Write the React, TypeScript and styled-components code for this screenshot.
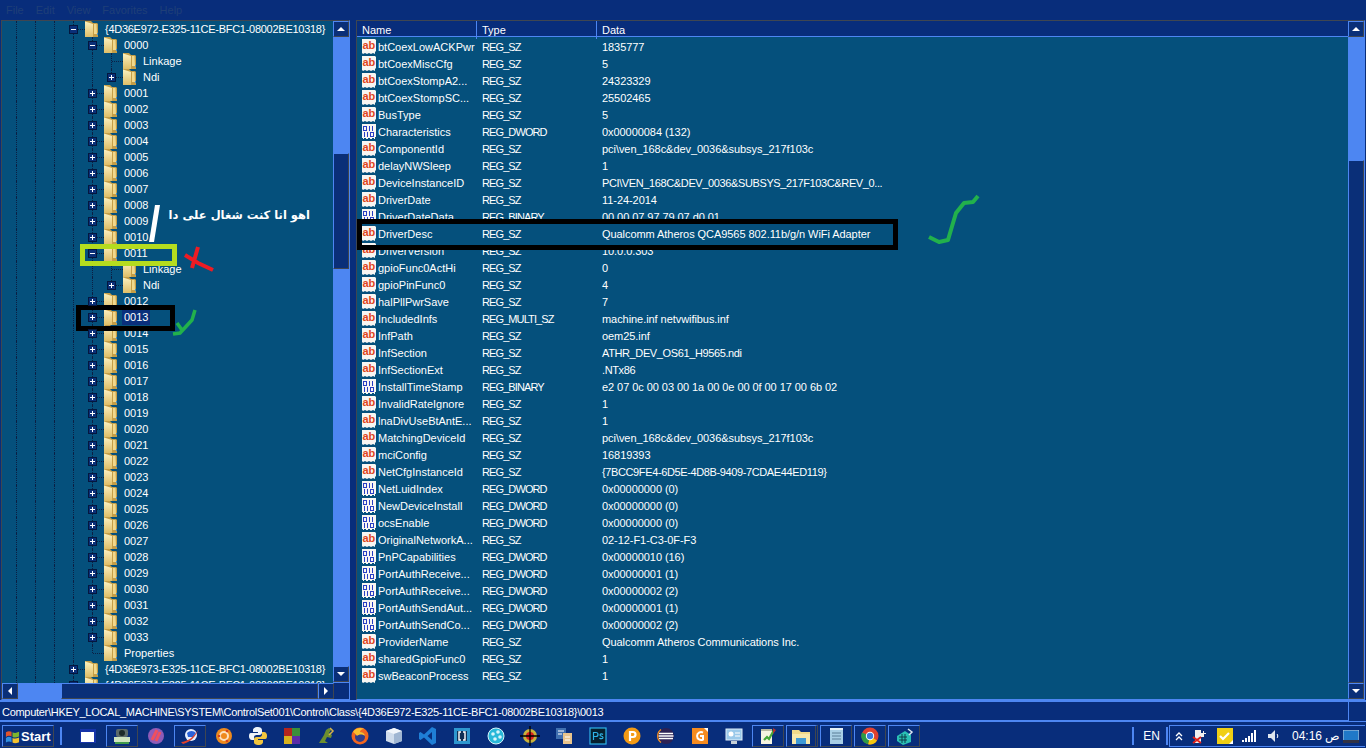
import React from 'react';
import styled, { createGlobalStyle } from 'styled-components';

const NAVY = '#082d7b';
const PANE = '#05507c';
const LIGHT = '#4d86f2';
const FRAME = '#3f4651';

const GlobalStyle = createGlobalStyle`
  html, body { margin: 0; padding: 0; height: 100%; overflow: hidden; background: ${NAVY}; }
  #root { height: 100%; }
  * { box-sizing: border-box; }
`;

const Page = styled.div`
  position: relative;
  width: 1366px;
  height: 748px;
  display: flex;
  flex-direction: column;
  background: ${NAVY};
  color: #fff;
  font-family: "Liberation Sans", sans-serif;
  font-size: 11px;
  overflow: hidden;
`;

/* menu */
const MenuBar = styled.div`
  height: 20px;
  flex: none;
  display: flex;
  align-items: center;
  gap: 12px;
  padding-left: 6px;
  color: #1f3f78;
  font-size: 11px;
`;

const Workspace = styled.div`
  height: 680px;
  flex: none;
  display: flex;
  padding-left: 1px;
  gap: 6px;
`;

const Pane = styled.div<{ $w: number }>`
  width: ${p => p.$w}px;
  flex: none;
  display: flex;
  flex-direction: column;
  border: 1px solid ${FRAME};
  border-right-color: ${LIGHT};
  border-bottom-color: ${LIGHT};
  background: ${PANE};
  overflow: hidden;
`;

const PaneBody = styled.div`
  flex: 1;
  min-height: 0;
  display: flex;
`;

/* tree */
const TreeColumn = styled.div`
  flex: 1;
  display: flex;
  flex-direction: column;
  min-width: 0;
  overflow: hidden;
`;

const TreeRows = styled.div`
  flex: 1;
  min-height: 0;
  overflow: hidden;
  padding-left: 5px;
`;

const TreeRow = styled.div`
  height: 16px;
  display: flex;
  align-items: center;
`;

const Guide = styled.div<{ $half?: boolean }>`
  width: 19px;
  height: 16px;
  flex: none;
  position: relative;
  &::before {
    content: "";
    position: absolute;
    left: 9px;
    top: 0;
    height: ${p => (p.$half ? '8px' : '16px')};
    border-left: 1px dotted #0b1f44;
  }
`;

const ExpanderCell = styled(Guide)`
  &::after {
    content: "";
    position: absolute;
    left: 10px;
    top: 8px;
    width: 11px;
    border-top: 1px dotted #0b1f44;
  }
`;

const Expander = styled.div`
  position: absolute;
  left: 5px;
  top: 4px;
  width: 9px;
  height: 9px;
  z-index: 1;
  background: #0a2f78;
  border: 1px solid #04173f;
  &::before {
    content: "";
    position: absolute;
    left: 1px;
    top: 3px;
    width: 5px;
    height: 1px;
    background: #fff;
  }
`;

const ExpanderPlus = styled(Expander)`
  &::after {
    content: "";
    position: absolute;
    left: 3px;
    top: 1px;
    width: 1px;
    height: 5px;
    background: #fff;
  }
`;

const FolderIcon = styled.svg`
  width: 13px;
  height: 16px;
  flex: none;
  margin-left: 2px;
`;

const TreeLabel = styled.span<{ $sel?: boolean; $guid?: boolean }>`
  margin-left: 5px;
  padding: 0 2px;
  height: 16px;
  line-height: 16px;
  white-space: nowrap;
  letter-spacing: ${p => (p.$guid ? '-0.27px' : '0')};
  background: ${p => (p.$sel ? '#0a2f7c' : 'transparent')};
`;

/* scrollbars */
const VScroll = styled.div`
  width: 16px;
  flex: none;
  display: flex;
  flex-direction: column;
  background: ${LIGHT};
`;

const HScroll = styled.div`
  height: 16px;
  flex: none;
  display: flex;
  background: ${LIGHT};
`;

const ScrollBtn = styled.div`
  width: 16px;
  height: 16px;
  flex: none;
  display: flex;
  align-items: center;
  justify-content: center;
  background: #0a2f78;
  border: 1px solid ${LIGHT};
  border-right-color: ${FRAME};
  border-bottom-color: ${FRAME};
  svg { display: block; }
`;

const Track = styled.div<{ $size: number }>`
  flex: none;
  flex-basis: ${p => p.$size}px;
`;

const Thumb = styled.div<{ $size: number }>`
  flex: none;
  flex-basis: ${p => p.$size}px;
  background: #0a2f78;
  border: 1px solid ${LIGHT};
  border-right-color: ${FRAME};
  border-bottom-color: ${FRAME};
`;

const Corner = styled.div`
  width: 16px;
  flex: none;
  background: ${NAVY};
`;

/* list */
const ListColumn = styled.div`
  flex: 1;
  min-width: 0;
  display: flex;
  flex-direction: column;
`;

const ListHeader = styled.div`
  height: 16px;
  flex: none;
  display: grid;
  grid-template-columns: 120px 120px 1fr;
  background: ${NAVY};
  border-bottom: 1px solid ${LIGHT};
`;

const HeaderCell = styled.div`
  padding-left: 5px;
  line-height: 18px;
  border-right: 1px solid ${LIGHT};
  &:last-child { border-right: none; }
`;

const ValueRows = styled.div`
  flex: 1;
  min-height: 0;
  overflow: hidden;
  padding-top: 1px;
`;

const ValueRow = styled.div`
  height: 17px;
  display: grid;
  grid-template-columns: 120px 120px 1fr;
  align-items: center;
  white-space: nowrap;
`;

const NameCell = styled.div`
  display: flex;
  align-items: center;
  gap: 1px;
  padding-left: 4px;
`;

const TypeCell = styled.div`
  padding-left: 5px;
  letter-spacing: -0.9px;
`;

const DataCell = styled.div<{ $caps: boolean }>`
  padding-left: 5px;
  letter-spacing: ${p => (p.$caps ? '-0.38px' : '-0.06px')};
`;

const ValueGlyph = styled.svg`
  width: 16px;
  height: 16px;
  flex: none;
  display: block;
`;

/* status */
const StatusBar = styled.div`
  height: 22px;
  flex: none;
  border-top: 2px solid ${LIGHT};
  border-bottom: 1px solid ${LIGHT};
`;

const StatusInner = styled.div`
  width: 1349px;
  height: 100%;
  padding: 1px 0 0 2px;
  display: flex;
  align-items: center;
  letter-spacing: -0.29px;
  border-right: 1px solid ${LIGHT};
  border-bottom: 1px solid ${LIGHT};
`;

/* taskbar */
const Taskbar = styled.div`
  height: 26px;
  flex: none;
  display: flex;
  align-items: center;
  padding: 2px 0 0 2px;
  background: ${NAVY};
`;

const StartButton = styled.div`
  width: 52px;
  height: 22px;
  flex: none;
  display: flex;
  align-items: center;
  gap: 1px;
  padding-left: 2px;
  border: 1px solid ${LIGHT};
  border-right-color: ${FRAME};
  border-bottom-color: ${FRAME};
  font-weight: 700;
  font-size: 13px;
`;

const Divider = styled.div<{ $gap?: number }>`
  width: 2px;
  height: 18px;
  flex: none;
  margin: 0 ${p => p.$gap ?? 0}px;
  background: ${LIGHT};
`;

const QuickLaunch = styled.div`
  display: flex;
  align-items: center;
  margin-left: 4px;
`;

const Slot = styled.div<{ $active?: boolean; $stack?: boolean }>`
  width: 32px;
  height: 22px;
  margin-right: 2px;
  flex: none;
  display: flex;
  align-items: center;
  justify-content: center;
  border: 1px solid transparent;
  ${p => p.$active && `
    border-color: ${LIGHT} ${FRAME} ${FRAME} ${LIGHT};
  `}
  ${p => p.$stack && `
    border-right: 3px double ${FRAME};
  `}
  svg { display: block; }
`;

const TrayArea = styled.div`
  margin-left: auto;
  display: flex;
  align-items: center;
`;

const Lang = styled.div`
  width: 32px;
  padding-left: 3px;
  text-align: center;
  font-size: 12px;
`;

const Tray = styled.div`
  width: 196px;
  height: 22px;
  margin-left: 1px;
  margin-right: 1px;
  display: flex;
  align-items: center;
  border: 1px solid ${LIGHT};
  border-right: none;
  padding-left: 4px;
`;

const TrayIcon = styled.div<{ $w: number }>`
  width: ${p => p.$w}px;
  flex: none;
  display: flex;
  justify-content: center;
  svg { display: block; }
`;

const Clock = styled.div`
  width: 51px;
  flex: none;
  font-size: 12px;
  white-space: nowrap;
  margin-left: 8px;
`;

/* screenshot annotations drawn over the window */
const MarkBox = styled.div<{ $x: number; $y: number; $w: number; $h: number; $color: string }>`
  position: absolute;
  left: ${p => p.$x}px;
  top: ${p => p.$y}px;
  width: ${p => p.$w}px;
  height: ${p => p.$h}px;
  border: 5px solid ${p => p.$color};
`;

const Scribbles = styled.svg`
  position: absolute;
  left: 0;
  top: 0;
  width: 1366px;
  height: 748px;
  pointer-events: none;
`;

const ArabicNote = styled.div`
  position: absolute;
  left: 170px;
  top: 205px;
  width: 140px;
  text-align: right;
  direction: rtl;
  white-space: nowrap;
  font-family: "DejaVu Sans", sans-serif;
  font-weight: 700;
  font-size: 11.5px;
  line-height: 20px;
  color: #fff;
`;

const Folder = () => (
  <FolderIcon viewBox="0 0 13 16">
    <path d="M0 0h6l2 2h4l1 1v13H0z" fill="#c49e47" />
    <path d="M0 .5 8 3v13H0z" fill="url(#folderFront)" />
    <path d="M9 3h2.500L12 13H9z" fill="#f0d88c" />
    <path d="M12 12h1v2h-1z" fill="#4a90c8" />
  </FolderIcon>
);

const PAGE_PATH = 'M1 0h13l1 1v11l-1 1v2l-2-1-2 1-2-1-2 1-2-1-2 1-1-1z';

const StringGlyph = () => (
  <ValueGlyph viewBox="0 0 16 16">
    <path d={PAGE_PATH} fill="#f8f6f2" />
    <text x="1.500" y="10" fontFamily="Liberation Sans, sans-serif" fontWeight="700" fontSize="11" fill="#e0461e">ab</text>
  </ValueGlyph>
);

const BinaryGlyph = () => (
  <ValueGlyph viewBox="0 0 16 16" shapeRendering="crispEdges">
    <path d={PAGE_PATH} fill="#f8f6f2" />
    <g fill="none" stroke="#2a3fc4">
      <rect x="2.500" y="2.500" width="3" height="4" />
      <rect x="9.500" y="8.500" width="3" height="4" />
    </g>
    <path d="M8 2h1v5H8zM11 2h1v5h-1zM3 8h1v5H3zM6 8h1v5H6z" fill="#2a3fc4" />
  </ValueGlyph>
);

type TreeItem = { label: string; guides: number; open?: boolean; leaf?: boolean; sel?: boolean; last?: boolean };

const num = (n: number) => String(n).padStart(4, '0');

const treeItems: TreeItem[] = [
  { label: '{4D36E972-E325-11CE-BFC1-08002BE10318}', guides: 3, open: true },
  { label: '0000', guides: 4, open: true },
  { label: 'Linkage', guides: 5, leaf: true },
  { label: 'Ndi', guides: 5, last: true },
  ...[1, 2, 3, 4, 5, 6, 7, 8, 9, 10].map(n => ({ label: num(n), guides: 4 })),
  { label: '0011', guides: 4, open: true },
  { label: 'Linkage', guides: 5, leaf: true },
  { label: 'Ndi', guides: 5, last: true },
  { label: '0012', guides: 4 },
  { label: '0013', guides: 4, sel: true },
  ...Array.from({ length: 20 }, (_, i) => ({ label: num(i + 14), guides: 4 })),
  { label: 'Properties', guides: 4, leaf: true, last: true },
  { label: '{4D36E973-E325-11CE-BFC1-08002BE10318}', guides: 3 },
  { label: '{4D36E974-E325-11CE-BFC1-08002BE10318}', guides: 3 },
];

const values: [string, string, string][] = [
  ['btCoexLowACKPwr', 'REG_SZ', '1835777'],
  ['btCoexMiscCfg', 'REG_SZ', '5'],
  ['btCoexStompA2...', 'REG_SZ', '24323329'],
  ['btCoexStompSC...', 'REG_SZ', '25502465'],
  ['BusType', 'REG_SZ', '5'],
  ['Characteristics', 'REG_DWORD', '0x00000084 (132)'],
  ['ComponentId', 'REG_SZ', 'pci\\ven_168c&dev_0036&subsys_217f103c'],
  ['delayNWSleep', 'REG_SZ', '1'],
  ['DeviceInstanceID', 'REG_SZ', 'PCI\\VEN_168C&DEV_0036&SUBSYS_217F103C&REV_0...'],
  ['DriverDate', 'REG_SZ', '11-24-2014'],
  ['DriverDateData', 'REG_BINARY', '00 00 07 97 79 07 d0 01'],
  ['DriverDesc', 'REG_SZ', 'Qualcomm Atheros QCA9565 802.11b/g/n WiFi Adapter'],
  ['DriverVersion', 'REG_SZ', '10.0.0.303'],
  ['gpioFunc0ActHi', 'REG_SZ', '0'],
  ['gpioPinFunc0', 'REG_SZ', '4'],
  ['halPllPwrSave', 'REG_SZ', '7'],
  ['IncludedInfs', 'REG_MULTI_SZ', 'machine.inf netvwifibus.inf'],
  ['InfPath', 'REG_SZ', 'oem25.inf'],
  ['InfSection', 'REG_SZ', 'ATHR_DEV_OS61_H9565.ndi'],
  ['InfSectionExt', 'REG_SZ', '.NTx86'],
  ['InstallTimeStamp', 'REG_BINARY', 'e2 07 0c 00 03 00 1a 00 0e 00 0f 00 17 00 6b 02'],
  ['InvalidRateIgnore', 'REG_SZ', '1'],
  ['lnaDivUseBtAntE...', 'REG_SZ', '1'],
  ['MatchingDeviceId', 'REG_SZ', 'pci\\ven_168c&dev_0036&subsys_217f103c'],
  ['mciConfig', 'REG_SZ', '16819393'],
  ['NetCfgInstanceId', 'REG_SZ', '{7BCC9FE4-6D5E-4D8B-9409-7CDAE44ED119}'],
  ['NetLuidIndex', 'REG_DWORD', '0x00000000 (0)'],
  ['NewDeviceInstall', 'REG_DWORD', '0x00000000 (0)'],
  ['ocsEnable', 'REG_DWORD', '0x00000000 (0)'],
  ['OriginalNetworkA...', 'REG_SZ', '02-12-F1-C3-0F-F3'],
  ['PnPCapabilities', 'REG_DWORD', '0x00000010 (16)'],
  ['PortAuthReceive...', 'REG_DWORD', '0x00000001 (1)'],
  ['PortAuthReceive...', 'REG_DWORD', '0x00000002 (2)'],
  ['PortAuthSendAut...', 'REG_DWORD', '0x00000001 (1)'],
  ['PortAuthSendCo...', 'REG_DWORD', '0x00000002 (2)'],
  ['ProviderName', 'REG_SZ', 'Qualcomm Atheros Communications Inc.'],
  ['sharedGpioFunc0', 'REG_SZ', '1'],
  ['swBeaconProcess', 'REG_SZ', '1'],
];

// capitals run wide in Liberation, so values that are mostly capitals get tightened
const mostlyCaps = (s: string) => (s.match(/[A-Z]/g) || []).length / s.length > 0.3;

const Arrow = ({ dir }: { dir: 'up' | 'down' | 'left' | 'right' }) => {
  const pts = { up: '1,7 9,7 5,3', down: '1,3 9,3 5,7', left: '7,1 7,9 3,5', right: '3,1 3,9 7,5' }[dir];
  return (
    <svg width="10" height="10" viewBox="0 0 10 10">
      <polygon points={pts} fill="#fff" />
    </svg>
  );
};

const S = ({ children }: { children: React.ReactNode }) => (
  <svg width="20" height="20" viewBox="0 0 20 20">{children}</svg>
);

const appIcons: { active?: boolean; stack?: boolean; icon: React.ReactNode }[] = [
  { icon: <S><rect x="2" y="3" width="16" height="14" fill="#1633a8" /><rect x="3" y="6" width="13" height="10" fill="#fff" /></S> },
  { active: true, icon: <S><rect x="2" y="11" width="16" height="5" fill="#cfe3c0" /><rect x="4" y="3" width="12" height="8" rx="2" fill="#5c6b6a" /><circle cx="10" cy="7" r="3" fill="#1c2a2a" /><rect x="3" y="16" width="14" height="2" fill="#3f9a4a" /></S> },
  { icon: <S><circle cx="10" cy="10" r="8" fill="#8e5bb8" /><path d="M6 14 11 4M10 15l4-9" stroke="#ef4f5e" strokeWidth="3" /></S> },
  { active: true, icon: <S><circle cx="11" cy="9" r="6" fill="#e8f0ff" /><path d="M7 7a6 6 0 0 1 9 0l-3 4H8z" fill="#2b62d9" /><path d="M1 16c6 0 13-5 17-12-2 6-7 12-15 14z" fill="#e0402a" /></S> },
  { icon: <S><circle cx="10" cy="10" r="8" fill="#ef8a1d" /><circle cx="10" cy="10" r="4" fill="none" stroke="#fce2c2" strokeWidth="2" /><circle cx="5" cy="10" r="1.300" fill="#d8431e" /><circle cx="13" cy="5" r="1.300" fill="#d8431e" /><circle cx="13" cy="15" r="1.300" fill="#d8431e" /></S> },
  { icon: <S><path d="M10 1c-4 0-5 1.500-5 3v2h5v1H3C1 7 1 9 1 10.500S2 14 4 14h2v-2.500C6 10 7 9 8.500 9h3C13 9 14 8 14 6.500V4c0-2-2-3-4-3z" fill="#eef3f8" /><path d="M10 19c4 0 5-1.500 5-3v-2h-5v-1h7c2 0 2-2 2-3.500S18 6 16 6h-2v2.500C14 10 13 11 11.500 11h-3C7 11 6 12 6 13.500V16c0 2 2 3 4 3z" fill="#f2c53d" /></S> },
  { icon: <S><rect x="2" y="2" width="8" height="8" fill="#b3261e" /><rect x="10" y="2" width="8" height="8" fill="#3b8f3a" /><rect x="2" y="10" width="8" height="8" fill="#d8b21e" /><rect x="10" y="10" width="8" height="8" fill="#5b2da8" /></S> },
  { icon: <S><path d="M3 17 8 9l2-5 3-2 2 2-2 3 3 2-1 3-4-1-2 4 3 2H6z" fill="#6c8e2e" /><path d="m14 2 3 3-4 4" stroke="#d6b34a" strokeWidth="1.500" fill="none" /></S> },
  { icon: <S><circle cx="10" cy="10" r="8.500" fill="#f2651f" /><circle cx="10" cy="11" r="5" fill="#2e3e8c" /><path d="M3 6c2-4 8-5 11-3-3 0-4 2-4 3 3 0 5 2 5 4-2-2-6-2-8 0-1-1-2-3-4-4z" fill="#fbbf2d" /></S> },
  { icon: <S><path d="m10 2 8 3v10l-8 3-8-3V5z" fill="#cfdcec" /><path d="m10 2 8 3-8 3-8-3z" fill="#f2f6fb" /><path d="M10 8v10l8-3V5z" fill="#a0b6d2" /></S> },
  { icon: <S><path d="M14 1 18 3v14l-4 2L6 11.500 2.500 14 1 13V7l1.500-1L6 8.500zM14 6l-4.500 4 4.500 4z" fill="#1f7fd6" /></S> },
  { icon: <S><rect x="2" y="2" width="16" height="16" fill="#2e97cf" /><rect x="5" y="5" width="10" height="10" fill="#0f2f55" /><path d="M9 6H7v8h2M11 6h2v8h-2" stroke="#fff" strokeWidth="1.400" fill="none" /></S> },
  { icon: <S><circle cx="10" cy="10" r="8" fill="#28b8d8" stroke="#d8f4fa" /><circle cx="7" cy="8" r="1.800" fill="#d8f4fa" /><circle cx="12" cy="6" r="1.800" fill="#d8f4fa" /><circle cx="14" cy="11" r="1.800" fill="#d8f4fa" /><circle cx="9" cy="13" r="1.800" fill="#d8f4fa" /></S> },
  { icon: <S><circle cx="10" cy="10" r="7" fill="#c9b23a" /><circle cx="10" cy="10" r="4" fill="#d61f1f" /><path d="M0 10h20M10 0v20" stroke="#000" strokeWidth="1.300" /></S> },
  { icon: <S><rect x="2" y="2" width="10" height="11" fill="#3f6fb0" /><rect x="9" y="7" width="9" height="11" fill="#e9c48c" /><path d="M4 5h6M4 8h4M11 11h5M11 14h5" stroke="#fff" strokeWidth="1.200" /></S> },
  { icon: <S><rect x="2" y="2" width="16" height="16" fill="#06202e" stroke="#2fb4e8" strokeWidth="1.200" /><path d="M5.500 14V6.500H8a2 2 0 0 1 0 4H5.500M15 8.500c-1-1-3-1-3 .5s3 1 3 2.500-2.500 1.500-3.500.5" stroke="#2fb4e8" strokeWidth="1.200" fill="none" /></S> },
  { icon: <S><circle cx="10" cy="10" r="8.500" fill="#f39a14" /><path d="M8 15V6h3a2.500 2.500 0 0 1 0 5H8" stroke="#fff" strokeWidth="2.200" fill="none" /></S> },
  { icon: <S><circle cx="10" cy="10" r="8" fill="#2c2255" /><path d="M3 7.500h14M2.500 10h15M3 12.500h14" stroke="#fff" strokeWidth="1.300" /><path d="M5 3.500A8 8 0 0 0 5 16.500" stroke="#f78f1e" strokeWidth="1.300" fill="none" /></S> },
  { icon: <S><rect x="2" y="2" width="16" height="16" fill="#f68b1f" /><path d="M13 6.500a4 4 0 1 0 0 7V10h-3" stroke="#fff" strokeWidth="2" fill="none" /><path d="M14 2h4v4z" fill="#fff" /></S> },
  { icon: <S><rect x="2" y="3" width="16" height="11" fill="#9ac9ea" stroke="#dfeefa" /><circle cx="7" cy="8" r="2.500" fill="#fff" /><path d="M11 7h5M11 10h5" stroke="#fff" /><rect x="7" y="15" width="6" height="3" fill="#c8d0d8" /></S> },
  { active: true, icon: <S><path d="M3 3h11v15H3z" fill="#f6f4e0" /><path d="M3 3h11v2H3z" fill="#b9b9a0" /><path d="m6 14 3-3 2 2 5-9" stroke="#48a838" strokeWidth="2.200" fill="none" /><path d="m15 2 3 2-3 4z" fill="#b4322c" /></S> },
  { active: true, stack: true, icon: <S><path d="M1 4h7l2 2h9v12H1z" fill="#f0d98a" /><path d="M1 8h18v10H1z" fill="#f7e8ac" /><rect x="5" y="12" width="10" height="6" fill="#3f9ad6" /></S> },
  { active: true, icon: <S><path d="M4 3h13v15H4z" fill="#a9cfe6" /><path d="M6 7h9M6 10h9M6 13h9" stroke="#5b7f98" /><path d="M4 2h13v2H4z" fill="#e6f0f6" /></S> },
  { active: true, icon: <S><circle cx="10" cy="10" r="8.500" fill="#e0412f" /><path d="M10 10 17 14.500A8.500 8.500 0 0 1 8 18.300z" fill="#f6c90e" /><path d="M10 10 8 18.300A8.500 8.500 0 0 1 2 6.500z" fill="#2e9b46" /><circle cx="10" cy="10" r="4.200" fill="#fff" /><circle cx="10" cy="10" r="3.200" fill="#3b7de0" /></S> },
  { active: true, icon: <S><path d="M3 10 11 5l6 4v7l-8 3-6-4z" fill="#2abfb4" /><path d="M5 11h8M5 14h8M8 8v9M11 8v9" stroke="#0a3d4a" /><path d="m14 3 4 3-3 3" stroke="#d9e6f0" strokeWidth="1.500" fill="none" /></S> },
];

function App() {
  return (
    <Page>
      <GlobalStyle />
      {/* shared gradient for all the folder icons in the tree */}
      <svg width="0" height="0" style={{ position: 'absolute' }}>
        <defs>
          <linearGradient id="folderFront" x1="0" x2="0" y1="0" y2="1">
            <stop offset="0" stopColor="#fbf1c0" />
            <stop offset="1" stopColor="#dfbf68" />
          </linearGradient>
        </defs>
      </svg>
      <MenuBar>
        <span>File</span><span>Edit</span><span>View</span><span>Favorites</span><span>Help</span>
      </MenuBar>
      <Workspace>
        <Pane $w={349}>
          <PaneBody>
            <TreeColumn>
              <TreeRows>
                {treeItems.map((t, i) => (
                  <TreeRow key={i}>
                    {Array.from({ length: t.guides }, (_, j) => <Guide key={j} />)}
                    <ExpanderCell $half={t.last}>
                      {!t.leaf && (t.open ? <Expander /> : <ExpanderPlus />)}
                    </ExpanderCell>
                    <Folder />
                    <TreeLabel $sel={t.sel} $guid={t.label.length > 20}>{t.label}</TreeLabel>
                  </TreeRow>
                ))}
              </TreeRows>
            </TreeColumn>
            <VScroll>
              <ScrollBtn><Arrow dir="up" /></ScrollBtn>
              <Track $size={116} />
              <Thumb $size={116} />
              <Track $size={397} />
              <ScrollBtn><Arrow dir="down" /></ScrollBtn>
            </VScroll>
          </PaneBody>
          <HScroll>
            <ScrollBtn><Arrow dir="left" /></ScrollBtn>
            <Track $size={43} />
            <Thumb $size={257} />
            <ScrollBtn><Arrow dir="right" /></ScrollBtn>
            <Corner />
          </HScroll>
        </Pane>
        <Pane $w={1009}>
          <PaneBody>
            <ListColumn>
              <ListHeader>
                <HeaderCell>Name</HeaderCell>
                <HeaderCell>Type</HeaderCell>
                <HeaderCell>Data</HeaderCell>
              </ListHeader>
              <ValueRows>
                {values.map((v, i) => (
                  <ValueRow key={i}>
                    <NameCell>
                      {v[1] === 'REG_DWORD' || v[1] === 'REG_BINARY' ? <BinaryGlyph /> : <StringGlyph />}
                      <span>{v[0]}</span>
                    </NameCell>
                    <TypeCell>{v[1]}</TypeCell>
                    <DataCell $caps={mostlyCaps(v[2])}>{v[2]}</DataCell>
                  </ValueRow>
                ))}
              </ValueRows>
            </ListColumn>
            <VScroll>
              <ScrollBtn><Arrow dir="up" /></ScrollBtn>
              <Track $size={123} />
              <Thumb $size={523} />
              <ScrollBtn><Arrow dir="down" /></ScrollBtn>
            </VScroll>
          </PaneBody>
        </Pane>
      </Workspace>
      <StatusBar>
        <StatusInner>Computer\HKEY_LOCAL_MACHINE\SYSTEM\ControlSet001\Control\Class\{'{'}4D36E972-E325-11CE-BFC1-08002BE10318{'}'}\0013</StatusInner>
      </StatusBar>
      <Taskbar>
        <StartButton>
          <svg width="15" height="15" viewBox="0 0 16 16">
            <path d="M1 3.500C3 2 5 2 7 3v5C5 7 3 7 1 8.500z" fill="#e2542c" />
            <path d="M8 3.500c2 1 4 1 7-.5v5c-3 1.500-5 1.500-7 .5z" fill="#7fb52e" />
            <path d="M1 9.500C3 8 5 8 7 9v5c-2-1-4-1-6 .5z" fill="#2f8fe0" />
            <path d="M8 9.500c2 1 4 1 7-.5v5c-3 1.500-5 1.500-7 .5z" fill="#f2c12e" />
          </svg>
          Start
        </StartButton>
        <Divider $gap={6} />
        <QuickLaunch>
          {appIcons.map((a, i) => <Slot key={i} $active={a.active} $stack={a.stack}>{a.icon}</Slot>)}
        </QuickLaunch>
        <TrayArea>
          <Divider />
          <Lang>EN</Lang>
          <Divider />
          <Tray>
            <TrayIcon $w={10}>
              <svg width="8" height="9" viewBox="0 0 8 9"><path d="M1 4l3-3 3 3M1 8l3-3 3 3" stroke="#fff" strokeWidth="1.300" fill="none" /></svg>
            </TrayIcon>
            <TrayIcon $w={32}>
              <svg width="16" height="16" viewBox="0 0 16 16"><path d="M3 2h6v3h2V3h1v2h2v1h-2v3h-3v6H3z" fill="#f0f0f0" /><path d="M1 9l8 6M9 9l-8 6" stroke="#e0201a" strokeWidth="2" /></svg>
            </TrayIcon>
            <TrayIcon $w={18}>
              <svg width="16" height="16" viewBox="0 0 16 16"><rect width="16" height="16" fill="#f0cf14" /><path d="m3 8 3 3 6-6" stroke="#fff" strokeWidth="2.200" fill="none" /><path d="M12 16l4-4v4z" fill="#fff" /></svg>
            </TrayIcon>
            <TrayIcon $w={30}>
              <svg width="15" height="12" viewBox="0 0 15 12"><path d="M0 10h2v2H0zM3 8h2v4H3zM6 6h2v6H6zM9 3h2v9H9zM12 0h2v12h-2z" fill="#fff" /></svg>
            </TrayIcon>
            <TrayIcon $w={20}>
              <svg width="12" height="12" viewBox="0 0 12 12"><path d="M0 4h3l4-4v12L3 8H0z" fill="#dfe6ee" /><path d="M9 4c1 1 1 3 0 4" stroke="#fff" fill="none" /></svg>
            </TrayIcon>
            <Clock>04:16 ص</Clock>
            <TrayIcon $w={16}>
              <svg width="16" height="13" viewBox="0 0 16 13"><rect width="16" height="13" fill="#1f78c8" stroke="#bcd" /><rect x="0" y="10" width="16" height="3" fill="#334" /></svg>
            </TrayIcon>
          </Tray>
        </TrayArea>
      </Taskbar>

      <MarkBox $x={80} $y={244} $w={97} $h={22} $color="#b5dc1f" />
      <MarkBox $x={76} $y={305} $w={99} $h={26} $color="#000" />
      <MarkBox $x={357} $y={219} $w={541} $h={31} $color="#000" />
      <ArabicNote>اهو انا كنت شغال على دا</ArabicNote>
      <Scribbles viewBox="0 0 1366 748">
        <path d="M155 205h5l-6 37h-5z" fill="#fff" />
        <path d="M198 247 192 268M185 255 198 263 213 270" stroke="#ed1c24" strokeWidth="4" fill="none" />
        <path d="M195 310 192 320 180 333 173 334M177 323 182 330" stroke="#22b14c" strokeWidth="3.500" fill="none" />
        <path d="M929 237 939 242 948 240 953 223 956 213 964 203 973 202 978 196" stroke="#22b14c" strokeWidth="4" fill="none" strokeLinejoin="round" />
      </Scribbles>
    </Page>
  );
}

export default App;
